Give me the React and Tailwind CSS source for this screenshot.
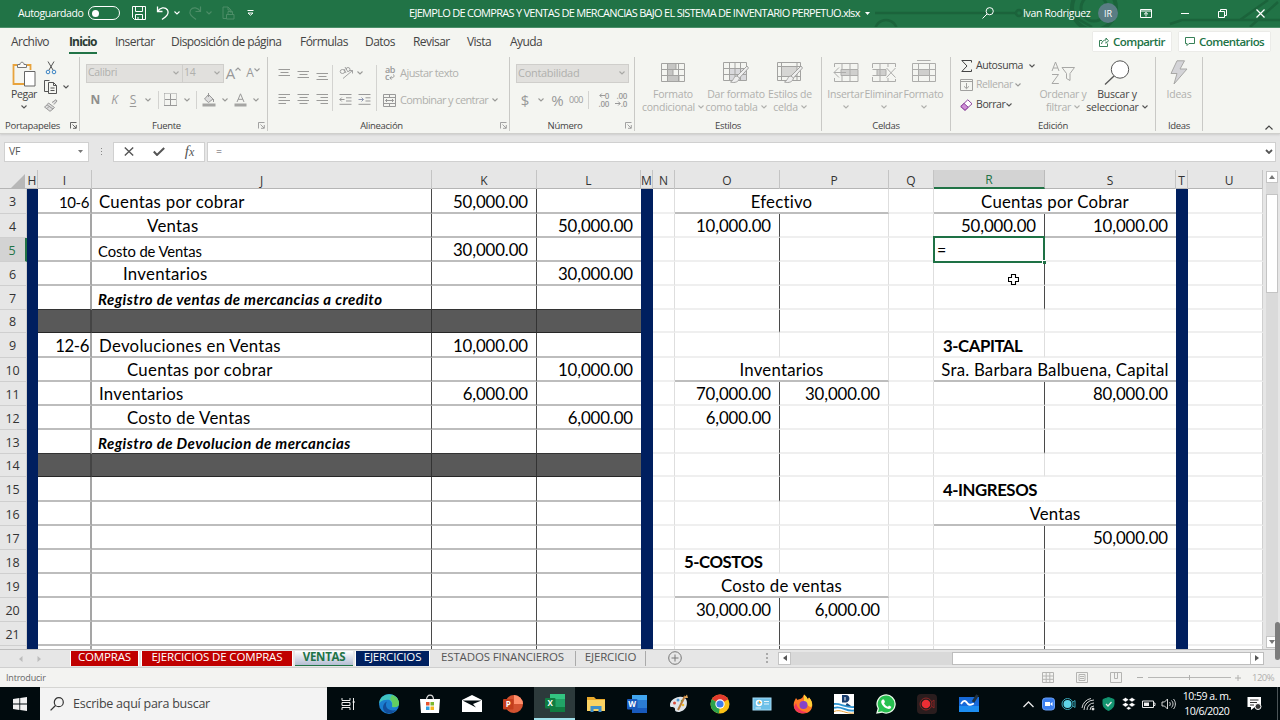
import React from "react";

const Chev = ({ className = "text-[#9a9a98]" }) => (
  <svg width="6" height="4" viewBox="0 0 6 4" className={`shrink-0 ${className}`}>
    <path d="M0.5 0.5 L3 3 L5.5 0.5" fill="none" stroke="currentColor" strokeWidth="1.1" />
  </svg>
);

const Slot = ({ className, children }) => (
  <div className={`flex h-full shrink-0 items-center justify-center ${className}`}>{children}</div>
);

const Icon = ({ w = 16, h = 16, className = "", children }) => (
  <svg width={w} height={h} viewBox={`0 0 ${w} ${h}`} fill="none" stroke="currentColor" className={`shrink-0 ${className}`}>
    {children}
  </svg>
);

/* ---------- title bar ---------- */

const TitleBar = () => (
  <header className="relative flex h-[28px] items-center border-b border-[#4b8f69] bg-[#217346] text-[11px] text-white">
    <svg className="absolute right-0 top-0" width="440" height="27" viewBox="0 0 440 27" fill="none" stroke="#1b633b" strokeWidth="2.5">
      <path d="M35 13 H175 M204 12 H226 L252 27" />
      <circle cx="179" cy="13" r="3" />
      <circle cx="46" cy="31" r="11" />
      <circle cx="254" cy="8" r="22" strokeWidth="4" />
      <circle cx="254" cy="8" r="13" strokeWidth="3" />
      <path d="M330 24 L342 20 H400 L428 0 M410 27 L438 2 M400 20 H440" />
    </svg>
    <div className="relative flex h-full w-full items-center">
      <span className="ml-[18px] w-[70px] whitespace-nowrap text-[10.5px] tracking-[-0.42px]">Autoguardado</span>
      <div className="flex h-[14px] w-[32px] items-center rounded-full border border-white pl-[3px]">
        <div className="h-[7px] w-[7px] rounded-full bg-white" />
      </div>
      <Slot className="ml-[10px] w-[18px]">
        <Icon w={14} h={14}>
          <path d="M0.5 0.5 H13.5 V13.5 H2.5 L0.5 11.5 Z M3.5 0.5 V5.5 H10.5 V0.5 M3.5 13.5 V8.5 H10.5 V13.5 M6 13 V11" />
        </Icon>
      </Slot>
      <Slot className="ml-[6px] w-[18px]">
        <Icon w={14} h={14} className="text-white">
          <path d="M1.5 0.5 V5.5 H6.5 M1.8 5.2 C4 1.5 9 0.5 11.5 4 C13.5 8 10 10.5 6 13.5" strokeWidth="1.3" />
        </Icon>
      </Slot>
      <Slot className="w-[10px]"><Chev className="text-white" /></Slot>
      <Slot className="ml-[4px] w-[18px]">
        <Icon w={14} h={14} className="text-[#4c8d67]">
          <path d="M12.5 0.5 V5.5 H7.5 M12.2 5.2 C10 1.5 5 0.5 2.5 4 C0.5 8 4 10.5 8 13.5" strokeWidth="1.2" />
        </Icon>
      </Slot>
      <Slot className="w-[10px]"><Chev className="text-[#4c8d67]" /></Slot>
      <Slot className="ml-[5px] w-[18px]">
        <Icon w={13} h={14} className="text-[#4c8d67]">
          <path d="M4 12.5 H1 V1 H6 L9 4 V7 M6 1 V4 H9 M4.5 8.5 H12 V13 H4.5 Z M6 8 V5.5 H10.5 V8" />
        </Icon>
      </Slot>
      <Slot className="ml-[5px] w-[17px]">
        <Icon w={7} h={6}>
          <path d="M0.5 0.5 H6.5 M1 3 L3.5 5.2 L6 3 Z" />
        </Icon>
      </Slot>
      <span className="ml-[150px] w-[456px] whitespace-nowrap text-[11px] tracking-[-0.71px]">
        EJEMPLO DE COMPRAS Y VENTAS DE MERCANCIAS BAJO EL SISTEMA DE INVENTARIO PERPETUO.xlsx
      </span>
      <svg width="5" height="3" viewBox="0 0 5 3"><path d="M0 0 H5 L2.5 3 Z" fill="#fff" /></svg>
      <Slot className="ml-[108px] w-[20px]">
        <Icon w={12} h={12}>
          <circle cx="7.7" cy="4.2" r="3.6" />
          <path d="M5 7 L0.5 11.5" />
        </Icon>
      </Slot>
      <span className="ml-[25px] w-[75px] whitespace-nowrap text-[10.5px] tracking-[-0.35px]">Ivan Rodriguez</span>
      <div className="flex h-[20px] w-[20px] items-center justify-center rounded-full bg-[#5a7d84] text-[9px]">IR</div>
      <Slot className="ml-[20px] w-[16px]">
        <Icon w={12} h={9}>
          <path d="M0.5 0.5 H11.5 V8.5 H0.5 Z M0.5 2 H11.5 M6 7.5 V3.5 M4 5.3 L6 3.5 L8 5.3" />
        </Icon>
      </Slot>
      <Slot className="ml-[22px] w-[18px]"><div className="h-px w-[8px] bg-white" /></Slot>
      <Slot className="ml-[19px] w-[18px]">
        <Icon w={9} h={9}>
          <path d="M0.5 2.5 H6.5 V8.5 H0.5 Z M2.5 2 V0.5 H8.5 V6.5 H7" />
        </Icon>
      </Slot>
      <Slot className="ml-[20px] w-[18px]">
        <Icon w={9} h={9}><path d="M0.5 0.5 L8.5 8.5 M8.5 0.5 L0.5 8.5" strokeWidth="1.2" /></Icon>
      </Slot>
    </div>
  </header>
);

/* ---------- menu ---------- */

const menu = [
  { label: "Archivo", w: "w-[58px]" },
  { label: "Inicio", w: "w-[46px]", active: true },
  { label: "Insertar", w: "w-[56px]" },
  { label: "Disposición de página", w: "w-[129px]" },
  { label: "Fórmulas", w: "w-[65px]" },
  { label: "Datos", w: "w-[48px]" },
  { label: "Revisar", w: "w-[54px]" },
  { label: "Vista", w: "w-[43px]" },
  { label: "Ayuda", w: "w-[60px]" },
];

const Menu = () => (
  <nav className="flex h-[28px] items-center pl-[11px] pr-[10px] text-[12px] text-[#444]">
    {menu.map((m) => (
      <div key={m.label} className={`flex h-full items-center whitespace-nowrap tracking-[-0.55px] ${m.w}`}>
        {m.active ? (
          <span className="mt-[3px] border-b-2 border-[#217346] font-bold leading-[20px] tracking-[-0.85px] text-[#2b3b33]">{m.label}</span>
        ) : (
          <span>{m.label}</span>
        )}
      </div>
    ))}
    <div className="ml-auto flex gap-[8px] text-[11.5px] font-semibold tracking-[-0.55px] text-[#217346]">
      <div className="flex h-[19px] w-[78px] items-center gap-[4px] bg-white pl-[6px] shadow-[0_0_1px_#bbb]">
        <Icon w={10} h={10}>
          <path d="M3 3.5 H0.5 V9.5 H8.5 V6.5 M2.5 7 C3 4 5 3 7 3 V1 L9.5 3.8 L7 6.3 V4.5" strokeWidth="0.9" />
        </Icon>
        Compartir
      </div>
      <div className="flex h-[19px] w-[91px] items-center gap-[4px] bg-white pl-[6px] shadow-[0_0_1px_#bbb]">
        <Icon w={10} h={9}>
          <path d="M0.5 0.5 H9.5 V6.5 H4 L2 8.5 V6.5 H0.5 Z" strokeWidth="0.9" />
        </Icon>
        Comentarios
      </div>
    </div>
  </nav>
);

/* ---------- ribbon ---------- */

const Group = ({ label, launcher, w, children }) => (
  <section className={`flex h-[74px] shrink-0 flex-col border-r border-[#c9c9c6] ${w}`}>
    <div className="h-[64px]">{children}</div>
    <div className="flex h-[10px] items-center">
      <span className="flex-1 whitespace-nowrap text-center text-[9.5px] leading-[10px] tracking-[-0.3px] text-[#444]">{label}</span>
      {launcher && (
        <Icon w={7} h={7} className={`mr-[2px] ml-[5px] ${launcher}`}>
          <path d="M0.5 6.5 V0.5 H6.5 M2.5 2.5 L6 6 M6.3 3 V6.3 H3" strokeWidth="0.9" />
        </Icon>
      )}
    </div>
  </section>
);

const Sep = ({ className = "h-[18px]" }) => <div className={`w-px shrink-0 bg-[#d3d3d0] ${className}`} />;

const Combo = ({ className, children }) => (
  <div className={`flex h-[19px] shrink-0 items-center justify-between border border-[#cfcecb] bg-[#e1e0dd] pl-[1px] pr-[3px] text-[10.5px] tracking-[-0.3px] text-[#b0b0ad] ${className}`}>
    {children}
    <Chev className="text-[#a8a8a5]" />
  </div>
);

const Lines = ({ d }) => (
  <Icon w={13} h={12} className="text-[#9b9b99]"><path d={d} /></Icon>
);

const Clipboard = () => (
  <div className="flex h-full">
    <div className="ml-[8px] flex w-[32px] flex-col items-center pt-[4px]">
      <Icon w={24} h={26}>
        <path d="M5 4 H1.5 V23 H12 M15 4 H18.5 V9" stroke="#e8a33d" strokeWidth="1.8" />
        <path d="M5.5 3.5 H8 C8 0.5 12 0.5 12 3.5 H14.5 V6.5 H5.5 Z" stroke="#777" fill="#fafafa" />
        <path d="M12.5 10.5 H23 V25 H12.5 Z" stroke="#666" fill="#fff" />
      </Icon>
      <span className="mt-[1px] text-[10.5px] leading-[13px] tracking-[-0.4px] text-[#444]">Pegar</span>
      <Chev className="mt-[4px] text-[#555]" />
    </div>
    <div className="ml-[4px] flex flex-col gap-[5px] pt-[4px]">
      <Icon w={14} h={14}>
        <path d="M4 0.5 L9 9 M10 0.5 L5 9" stroke="#555" />
        <circle cx="4" cy="11" r="1.8" stroke="#3a83c4" />
        <circle cx="10" cy="11" r="1.8" stroke="#3a83c4" />
      </Icon>
      <div className="flex items-center gap-[5px]">
        <Icon w={14} h={14} className="text-[#555]">
          <path d="M4 11.5 H0.5 V0.5 H5.5 M4.5 2.5 H9.5 L12.5 5.5 V13.5 H4.5 Z M9.5 2.5 V5.5 H12.5 M6.5 8 H10.5 M6.5 10.5 H10.5" />
        </Icon>
        <Chev className="text-[#555]" />
      </div>
      <Icon w={14} h={13} className="text-[#999]">
        <path d="M8 3.5 L12 0.7 L13 2 L10 5.5 M4.5 4 L10.5 8.5 L9 10 L3 5.8 Z M3 6 L0.5 8 L6 12.3 L9 10 M3 9.5 L5 7.5" fill="#ddd" />
      </Icon>
    </div>
  </div>
);

const Fuente = () => (
  <div className="pl-[6px] pt-[7px] text-[#999]">
    <div className="flex h-[19px] items-center">
      <Combo className="w-[97px]">Calibri</Combo>
      <Combo className="w-[41px] border-l-0">14</Combo>
      <Slot className="w-[19px] text-[15px]">A<Chev className="mb-[8px] rotate-180" /></Slot>
      <Slot className="w-[20px] text-[12px]">A<Chev className="mb-[7px]" /></Slot>
    </div>
    <div className="mt-[7px] flex h-[20px] items-center text-[12px]">
      <Slot className="w-[19px] font-bold text-[#8f8f8d]">N</Slot>
      <Slot className="w-[19px] italic">K</Slot>
      <Slot className="w-[18px] underline underline-offset-2">S</Slot>
      <Slot className="w-[12px]"><Chev /></Slot>
      <Sep className="ml-[4px] h-[18px]" />
      <Slot className="w-[23px]">
        <Icon w={13} h={13}>
          <path d="M0.5 0.5 H12.5 V12.5 M0.5 0.5 V12.5" strokeDasharray="1 1" />
          <path d="M6.5 1 V12 M1 6.5 H12 M0 12.5 H13" />
        </Icon>
      </Slot>
      <Slot className="w-[9px]"><Chev /></Slot>
      <Sep className="ml-[5px] h-[18px]" />
      <Slot className="w-[24px]">
        <Icon w={14} h={14}>
          <path d="M2.5 6 L6.5 1.5 L11 6 L6.5 9.5 Z M6.5 0 V4" fill="#ddd" />
          <path d="M11.5 6 V9" />
          <path d="M0.5 12 H13.5" strokeWidth="3" stroke="#a5a5a3" />
        </Icon>
      </Slot>
      <Slot className="w-[8px]"><Chev /></Slot>
      <Slot className="w-[23px]">
        <Icon w={13} h={14}>
          <path d="M3 9 L6.5 0.8 L10 9 M4.2 6.3 H8.8" />
          <path d="M0.5 12 H12.5" strokeWidth="3" stroke="#a5a5a3" />
        </Icon>
      </Slot>
      <Slot className="w-[8px]"><Chev /></Slot>
    </div>
  </div>
);

const Alineacion = () => (
  <div className="flex text-[10.5px] tracking-[-0.4px] text-[#b0b0ad]">
    <div className="ml-[7px] mt-[4px] grid h-[52px] w-[57px] grid-cols-3 place-items-center">
      <Lines d="M0.5 1.500 H12 M2.500 4.500 H10.500 M0.500 7.500 H12" />
      <Lines d="M0.5 3.500 H12 M2.500 6.500 H10.500 M0.500 9.500 H12" />
      <Lines d="M0.5 5.500 H12 M2.500 8.500 H10.500 M0.500 11.500 H12" />
      <Lines d="M0.5 0.500 H12 M0.500 3.500 H8 M0.500 6.500 H12 M0.500 9.500 H8" />
      <Lines d="M0.5 0.500 H12 M2.500 3.500 H10.500 M0.500 6.500 H12 M2.500 9.500 H10.500" />
      <Lines d="M0.5 0.500 H12 M4.500 3.500 H12 M0.500 6.500 H12 M4.500 9.500 H12" />
    </div>
    <Sep className="mt-[8px] h-[46px]" />
    <div className="mt-[4px] flex w-[43px] flex-col pl-[6px] text-[#999]">
      <div className="flex h-[24px] items-center gap-[3px]">
        <Icon w={15} h={13}>
          <path d="M3.5 5.5 m-2.3 0 a2.3 2 0 1 0 4.6 0 a2.3 2 0 1 0 -4.6 0 M5 3 L7 7 M6 1 L9 6 M9 3.5 m-2 0 a2 2 0 1 1 2 2 M4 12.5 L13.5 4.5 M10.5 4.5 H13.5 V7.5" strokeWidth="0.9" />
        </Icon>
        <Chev />
      </div>
      <div className="flex h-[28px] items-center gap-[6px] pt-[2px]">
        <Icon w={13} h={11}><path d="M0.5 0.5 H12.5 M7 3.8 H12.5 M7 7 H12.5 M0.5 10.3 H12.5 M5.5 5.5 H0.8 M2.8 3.5 L0.8 5.5 L2.8 7.5" /></Icon>
        <Icon w={13} h={11}><path d="M0.5 0.5 H12.5 M7.5 3.8 H12.5 M7.5 7 H12.5 M0.5 10.3 H12.5" /><path d="M0.5 5.5 H5.5 M3.5 3.5 L5.5 5.5 L3.5 7.5" stroke="#8f97b0" /></Icon>
      </div>
    </div>
    <Sep className="mt-[8px] h-[46px]" />
    <div className="mt-[3px] pl-[6px]">
      <div className="flex h-[27px] items-center">
        <Slot className="w-[14px] flex-col text-[9px] font-semibold text-[#999]">
          <span className="leading-[8px]">ab</span>
          <span className="flex items-center leading-[6px]">c<Icon w={6} h={6}><path d="M4.500 0.500 C6 3 4 4 1 4 M2.500 2.300 L0.800 4 L2.500 5.600" /></Icon></span>
        </Slot>
        <span className="ml-[3px] whitespace-nowrap text-[11px] tracking-[-0.55px]">Ajustar texto</span>
      </div>
      <div className="flex h-[27px] items-center">
        <Icon w={13} h={13} className="text-[#999]">
          <path d="M0.5 0.5 H12.5 V12.5 H0.5 Z M0.5 3.5 H12.5 M0.5 9.5 H12.5 M6.5 0.5 V3.5 M6.5 9.5 V12.5 M2.5 6.5 H10.5 M4 5 L2.5 6.5 L4 8 M9 5 L10.5 6.5 L9 8" />
        </Icon>
        <span className="ml-[4px] w-[92px] whitespace-nowrap text-[11px] tracking-[-0.6px]">Combinar y centrar</span>
        <Chev />
      </div>
    </div>
  </div>
);

const Decimals = ({ top, bottom, arrow }) => (
  <div className="flex w-[14px] flex-col items-end text-[8px] font-semibold tracking-[-0.3px]">
    <span className="flex items-center leading-[8px]">{arrow === "left" && <Icon w={6} h={5}><path d="M6 2.500 H1 M2.800 0.500 L0.800 2.500 L2.800 4.500" /></Icon>}{top}</span>
    <span className="flex items-center leading-[8px]">{arrow === "right" && <Icon w={6} h={5}><path d="M0 2.500 H5 M3.200 0.500 L5.200 2.500 L3.200 4.500" /></Icon>}{bottom}</span>
  </div>
);

const Numero = () => (
  <div className="pl-[6px] pt-[7px] text-[#999]">
    <Combo className="w-[113px] text-[11px]">Contabilidad</Combo>
    <div className="mt-[7px] flex h-[20px] items-center">
      <Slot className="w-[18px] text-[15px]">$</Slot>
      <Slot className="w-[14px]"><Chev /></Slot>
      <Slot className="w-[19px] text-[15px]">%</Slot>
      <Slot className="w-[18px] text-[9px] tracking-[-0.5px]">000</Slot>
      <Sep className="ml-[3px] h-[18px]" />
      <Slot className="ml-[4px] w-[18px]"><Decimals top="0" bottom=".00" arrow="left" /></Slot>
      <Slot className="w-[18px]"><Decimals top=".00" bottom=".0" arrow="right" /></Slot>
    </div>
  </div>
);

const Big = ({ w, icon, lines, chev, dark }) => (
  <div className={`flex shrink-0 flex-col items-center whitespace-nowrap pt-[3px] text-[10.5px] leading-[13px] tracking-[-0.25px] ${dark ? "text-[#444]" : "text-[#b0b0ad]"} ${w}`}>
    <div className="mb-[2px] flex h-[26px] items-center">{icon}</div>
    <span>{lines[0]}</span>
    {lines[1] ? (
      <span className="flex items-center gap-[3px]">{lines[1]}<Chev className={dark ? "text-[#555]" : "text-[#b0b0ad]"} /></span>
    ) : (
      chev && <Chev className="mt-[4px]" />
    )}
  </div>
);

const tableLines = "M0.5 0.5 H23.5 V18.5 H0.5 Z M0.5 6.5 H23.5 M0.5 12.5 H23.5 M6.5 0.5 V18.5 M17.5 0.5 V18.5";
const brush = "M24 4 L14 14 L16.5 16 L25.5 6 Z M14 14 C10.5 14 11 18.5 7.5 20 C12 21.5 16 19.5 16.5 16";

const Estilos = () => (
  <div className="flex pl-[5px]">
    <Big w="w-[66px]" lines={["Formato", "condicional"]} icon={
      <Icon w={24} h={19} className="text-[#a3a3a1]">
        <path d="M6.5 0.5 H15 V6.5 H6.5 Z M6.5 6.5 H12 V12.5 H6.5 Z M6.5 12.5 H18 V18.5 H6.5 Z" fill="#c6c6c4" />
        <path d={tableLines} />
      </Icon>} />
    <Big w="w-[60px]" lines={["Dar formato", "como tabla"]} icon={
      <Icon w={26} h={22} className="text-[#a3a3a1]">
        <path d="M6.5 6.5 H23.5 V18.5 H6.5 Z" fill="#d9d9dc" stroke="none" />
        <path d={tableLines + " M12 0.5 V18.5"} />
        <path d={brush} fill="#eee" />
      </Icon>} />
    <Big w="w-[48px]" lines={["Estilos de", "celda"]} icon={
      <Icon w={26} h={22} className="text-[#a3a3a1]">
        <path d="M5 5 H20 V14 H5 Z" fill="#d6d6d4" stroke="none" />
        <path d="M0.5 0.5 H23.5 V18.5 H0.5 Z M0.5 4.5 H23.5 M0.5 14.5 H23.5 M4.5 0.5 V18.5 M20 0.5 V18.5" />
        <path d={brush} fill="#eee" />
      </Icon>} />
  </div>
);

const Celdas = () => (
  <div className="flex pl-[3px]">
    <Big w="w-[41px]" chev lines={["Insertar"]} icon={
      <Icon w={26} h={19} className="text-[#adadab]">
        <path d="M8 6.5 H25 V12.5 H8 Z" fill="#cfcfcd" />
        <path d="M1.5 4 V0.5 H25 V6 M1.5 15 V18.5 H25 V12.5 M9 0.5 V6 M17 0.5 V18.5 M9 13 V18.5 M13 9.5 H1 M6 4.5 L1 9.5 L6 14.5" />
      </Icon>} />
    <Big w="w-[35px]" chev lines={["Eliminar"]} icon={
      <Icon w={24} h={19} className="text-[#adadab]">
        <path d="M5 6.5 H14 V12.5 H5 Z" fill="#cfcfcd" />
        <path d="M0.5 5 V0.5 H23.5 V4 M0.5 14 V18.5 H23.5 V16 M0.5 6.5 H14 M0.5 12.5 H14 M8 0.5 V18.5 M16 0.5 V4 M16 15 V18.5 M14.5 5 L23.5 14.5 M23.5 5 L14.5 14.5" />
      </Icon>} />
    <Big w="w-[45px]" chev lines={["Formato"]} icon={
      <Icon w={24} h={22} className="mb-[3px] text-[#adadab]">
        <path d="M6.5 9.5 H17.5 V15.5 H6.5 Z" fill="#cfcfcd" />
        <path d="M0.5 3.5 H23.5 V21.5 H0.5 Z M0.5 9.5 H23.5 M0.5 15.5 H23.5 M6.5 3.5 V21.5 M17.5 3.5 V21.5 M5 0.5 H18.5" />
      </Icon>} />
  </div>
);

const Edicion = () => (
  <div className="flex text-[10.5px] tracking-[-0.4px] text-[#444]">
    <div className="ml-[9px] flex w-[78px] flex-col">
      <div className="flex h-[19px] items-center">
        <Slot className="w-[13px]"><Icon w={11} h={12}><path d="M10.5 2.5 V0.5 H0.8 L6 6 L0.8 11.5 H10.5 V9.5" /></Icon></Slot>
        <span className="ml-[3px] w-[53px] whitespace-nowrap">Autosuma</span><Chev className="text-[#555]" />
      </div>
      <div className="flex h-[19px] items-center text-[#b0b0ad]">
        <Icon w={13} h={12} className="text-[#a0a09e]"><path d="M0.5 0.5 H12.5 V11.5 H0.5 Z M0.5 2.5 H12.5 M6.5 4 V9.5 M4 7.3 L6.5 9.7 L9 7.3" /></Icon>
        <span className="ml-[3px] w-[39px] whitespace-nowrap">Rellenar</span><Chev />
      </div>
      <div className="flex h-[20px] items-center">
        <Icon w={13} h={12}>
          <path d="M0.8 7.5 L7.8 0.8 L12 4.8 L5 11.3 Z" stroke="#8a3f9a" fill="#fff" />
          <path d="M0.8 7.5 L4 4.4 L8.2 8.3 L5 11.3 Z" stroke="#8a3f9a" fill="#cf8fd6" />
        </Icon>
        <span className="ml-[3px] w-[30px] whitespace-nowrap">Borrar</span><Chev className="text-[#555]" />
      </div>
    </div>
    <Big w="w-[50px]" lines={["Ordenar y", "filtrar"]} icon={
      <Icon w={25} h={24} className="text-[#a8a8a6]">
        <path d="M1 10 L4.5 1 L8 10 M2.2 7 H6.8 M1 13.5 H7.5 L1 22.5 H7.8 M11 6.5 H23.5 L19 12.5 V19.5 L15.5 17.5 V12.5 Z" />
      </Icon>} />
    <Big w="w-[58px]" dark lines={["Buscar y", "seleccionar"]} icon={
      <Icon w={26} h={25} className="text-[#555]">
        <circle cx="16" cy="9.5" r="8.7" fill="#fff" />
        <path d="M10 16 L1 24.5" strokeWidth="1.3" />
      </Icon>} />
  </div>
);

const Ribbon = () => (
  <div className="flex h-[78px] border-b border-[#cfcfcc] pt-[1px]">
    <Group label="Portapapeles" launcher="text-[#555]" w="w-[80px]"><Clipboard /></Group>
    <Group label="Fuente" launcher="text-[#999]" w="w-[188px]"><Fuente /></Group>
    <Group label="Alineación" launcher="text-[#999]" w="w-[242px]"><Alineacion /></Group>
    <Group label="Número" launcher="text-[#999]" w="w-[125px]"><Numero /></Group>
    <Group label="Estilos" w="w-[187px]"><Estilos /></Group>
    <Group label="Celdas" w="w-[129px]"><Celdas /></Group>
    <Group label="Edición" w="w-[205px]"><Edicion /></Group>
    <Group label="Ideas" w="w-[47px]">
      <Big w="w-[46px]" lines={["Ideas"]} icon={
        <Icon w={18} h={25} className="text-[#a8a8a6]">
          <path d="M7 0.8 H14.5 L10 9 H17 L4 24 L7 13.5 H1 Z" fill="#d4d4d8" />
        </Icon>} />
    </Group>
    <Icon w={8} h={5} className="mb-[3px] ml-auto mr-[7px] self-end text-[#444]"><path d="M0.5 4.5 L4 1 L7.5 4.5" strokeWidth="1.2" /></Icon>
  </div>
);

/* ---------- formula bar ---------- */

const FormulaBar = () => (
  <div className="flex h-[36px] items-start pl-[4px] pt-[8px] text-[10.5px] text-[#555]">
    <div className="flex h-[20px] w-[85px] items-center justify-between border border-[#d0d0d0] bg-white pl-[4px] pr-[5px] tracking-[-0.3px]">
      VF
      <svg width="5" height="3" viewBox="0 0 5 3"><path d="M0 0 H5 L2.5 3 Z" fill="#777" /></svg>
    </div>
    <div className="flex h-[20px] w-[24px] flex-col items-center justify-center gap-[2px]">
      <i className="h-px w-px bg-[#888]" /><i className="h-px w-px bg-[#888]" /><i className="h-px w-px bg-[#888]" />
    </div>
    <div className="flex h-[20px] w-[92px] items-center justify-around border border-[#d0d0d0] bg-white">
      <Icon w={10} h={9}><path d="M0.8 0.5 L9.2 8.5 M9.2 0.5 L0.8 8.5" strokeWidth="1.4" /></Icon>
      <Icon w={12} h={9}><path d="M0.8 4.5 L4 8 L11.2 1" strokeWidth="2" /></Icon>
      <span className="font-['Liberation_Serif',serif] text-[15px] italic leading-none">f<span className="text-[12px]">x</span></span>
    </div>
    <div className="ml-[2px] flex h-[20px] w-[1069px] items-center justify-between border border-[#d0d0d0] bg-white pl-[8px] pr-[2px]">
      =
      <Icon w={8} h={5}><path d="M1 1 L4 4 L7 1" strokeWidth="1.8" /></Icon>
    </div>
  </div>
);

/* ---------- grid ---------- */

const columns = [
  { id: "", w: "w-[27px]" },
  { id: "H", w: "w-[11px]" },
  { id: "I", w: "w-[54px]" },
  { id: "J", w: "w-[340px]" },
  { id: "K", w: "w-[105px]" },
  { id: "L", w: "w-[104px]" },
  { id: "M", w: "w-[12px]" },
  { id: "N", w: "w-[22px]" },
  { id: "O", w: "w-[105px]" },
  { id: "P", w: "w-[109px]" },
  { id: "Q", w: "w-[45px]" },
  { id: "R", w: "w-[111px]", active: true },
  { id: "S", w: "w-[131px]" },
  { id: "T", w: "w-[12px]" },
  { id: "U", w: "w-[75px] pl-[8px]" },
];

// j = [text, indent class, text class]; mid/right hold a T-account: title (t), heading (h) or a debit/credit pair
const small = "text-[14.8px] pt-[5px]";
const note = "text-[15px] pt-[5px] font-bold italic";

const rows = [
  { n: 3, i: "10-6", iSmall: true, j: ["Cuentas por cobrar", "pl-[7px]"], k: "50,000.00", mid: { t: "Efectivo" }, right: { t: "Cuentas por Cobrar" } },
  { n: 4, j: ["Ventas", "pl-[55px]"], l: "50,000.00", mid: { a: "10,000.00", v: 1 }, right: { a: "50,000.00", b: "10,000.00", v: 1, under: true } },
  { n: 5, j: ["Costo de Ventas", "pl-[6px]", small], k: "30,000.00", mid: { v: 1 }, right: { v: 1, editing: true } },
  { n: 6, j: ["Inventarios", "pl-[31px]"], l: "30,000.00", mid: { v: 1 }, right: { v: 1 } },
  { n: 7, j: ["Registro de ventas de mercancias a credito", "pl-[6px] tracking-[0.42px]", note], mid: { v: 1 }, right: { v: 1 } },
  { n: 8, dark: true, mid: { v: 1 }, right: {} },
  { n: 9, i: "12-6", j: ["Devoluciones en Ventas", "pl-[7px]"], k: "10,000.00", mid: {}, right: { h: "3-CAPITAL" } },
  { n: 10, j: ["Cuentas por cobrar", "pl-[35px]"], l: "10,000.00", mid: { t: "Inventarios" }, right: { t: "Sra. Barbara Balbuena, Capital" } },
  { n: 11, j: ["Inventarios", "pl-[7px]"], k: "6,000.00", mid: { a: "70,000.00", b: "30,000.00", v: 1 }, right: { b: "80,000.00", v: 1 } },
  { n: 12, j: ["Costo de Ventas", "pl-[35px]"], l: "6,000.00", mid: { a: "6,000.00", v: 1 }, right: { v: 1 } },
  { n: 13, j: ["Registro de Devolucion de mercancias", "pl-[6px] tracking-[0.42px]", note], mid: { v: 1 }, right: { v: 1 } },
  { n: 14, dark: true, mid: { v: 1 }, right: {} },
  { n: 15, mid: { v: 1 }, right: { h: "4-INGRESOS", merged: true } },
  { n: 16, mid: {}, right: { t: "Ventas" } },
  { n: 17, mid: {}, right: { b: "50,000.00", v: 1 } },
  { n: 18, mid: { h: "5-COSTOS" }, right: { v: 1 } },
  { n: 19, mid: { t: "Costo de ventas" }, right: { v: 1 } },
  { n: 20, mid: { a: "30,000.00", b: "6,000.00", v: 1 }, right: { v: 1 } },
  { n: 21, mid: { v: 1 }, right: { v: 1 } },
  { n: "", mid: { v: 1 }, right: { v: 1 } },
];

const light = "border-b-2 border-b-[#efefef]";
const gray = "border-b-2 border-b-[#bdbdbd]";

const Account = ({ data, w, wa, wb, edge }) => {
  if (data.t) {
    return <div className={`flex items-center justify-center whitespace-nowrap pt-[4px] tracking-[0.22px] ${w} ${gray} ${edge}`}>{data.t}</div>;
  }
  const line = data.v ? "border-r border-r-[#4a4a4a]" : data.merged ? "border-r border-r-white" : "border-r border-r-[#dedede]";
  const bottom = data.under ? gray : light;
  return (
    <div className={`flex ${w}`}>
      <div className={`relative flex items-center whitespace-nowrap pt-[4px] ${wa} ${bottom} ${line} ${data.h ? "pl-[9px] font-bold tracking-[-0.45px]" : "justify-end pr-[8px]"}`}>
        {data.h || data.a}
        {data.editing && (
          <div className="absolute -left-px -top-[2px] z-10 flex h-[27px] w-[112px] items-center border-2 border-[#1e7145] bg-white pl-[2px] pt-[2px] text-[16px]">
            =
            <i className="absolute -bottom-[3px] -right-[3px] h-[4px] w-[4px] border-l border-t border-white bg-[#1e7145]" />
          </div>
        )}
      </div>
      <div className={`flex items-center justify-end pr-[8px] pt-[4px] ${wb} ${bottom} ${edge}`}>{data.b}</div>
    </div>
  );
};

const rowHeight = (r) => {
  if (r.n === 3 || r.n === 9 || r.n === 15) return "h-[25px]";
  if (r.dark) return "h-[23px]";
  if (r.n === "") return "h-[3px]";
  return "h-[24px]";
};

const Row = ({ r, beforeDark }) => {
  // trailing sliver of the next row, cut off by the sheet tabs
  if (r.n === "") {
    return (
      <div className="flex h-[3px] shrink-0">
        <div className="w-[27px] border-r border-r-[#cfcfcf]" />
        <div className="w-[11px] bg-[#001f5f]" />
        <div className="w-[54px] border-r-2 border-r-[#a5a5a5]" />
        <div className="w-[340px] border-r border-r-[#4a4a4a]" />
        <div className="w-[105px] border-r border-r-[#4a4a4a]" />
        <div className="w-[104px]" />
        <div className="w-[12px] bg-[#001f5f]" />
        <div className="w-[22px] border-r border-r-[#dedede]" />
        <div className="w-[105px] border-r border-r-[#4a4a4a]" />
        <div className="w-[109px] border-r border-r-[#dedede]" />
        <div className="w-[45px] border-r border-r-[#dedede]" />
        <div className="w-[111px] border-r border-r-[#4a4a4a]" />
        <div className="w-[131px]" />
        <div className="w-[12px] bg-[#001f5f]" />
        <div className="w-[75px] border-r border-r-[#cfcfcf]" />
      </div>
    );
  }
  const edge = r.dark ? "border-b border-b-[#262626] bg-[#595959]" : beforeDark ? "border-b border-b-[#333]" : gray;
  const vline = r.dark ? "border-r border-r-[#333]" : "border-r border-r-[#4a4a4a]";
  const [text, indent, kind = "pt-[4px] tracking-[0.28px]"] = r.j || ["", ""];
  return (
    <div className={`flex shrink-0 ${rowHeight(r)}`}>
      <div className={`flex w-[27px] items-center justify-center border-b border-r border-b-[#cfcfcf] pr-px pt-[4px] font-['Open_Sans',sans-serif] text-[12.5px] tracking-[-0.2px] ${r.n === 5 ? "border-r-2 border-r-[#217346] bg-[#d3d3d3] text-[#217346]" : "border-r-[#cfcfcf] text-[#333]"}`}>
        {r.n}
      </div>
      <div className="w-[11px] bg-[#001f5f]" />
      <div className={`flex w-[54px] items-center justify-end pr-[1px] pt-[4px] tracking-[-0.4px] ${edge} ${r.dark ? "border-r-2 border-r-[#444]" : "border-r-2 border-r-[#a5a5a5]"} ${r.iSmall ? "text-[15px]" : ""}`}>{r.i}</div>
      <div className={`flex w-[340px] items-center whitespace-nowrap ${edge} ${vline} ${indent} ${kind}`}>{text}</div>
      <div className={`flex w-[105px] items-center justify-end pr-[8px] pt-[4px] ${edge} ${vline}`}>{r.k}</div>
      <div className={`flex w-[104px] items-center justify-end pr-[8px] pt-[4px] ${edge}`}>{r.l}</div>
      <div className="w-[12px] bg-[#001f5f]" />
      <div className={`w-[22px] border-r border-r-[#dedede] ${light}`} />
      <Account data={r.mid} w="w-[214px]" wa="w-[105px]" wb="w-[109px]" edge="border-r border-r-[#dedede]" />
      <div className={`w-[45px] border-r border-r-[#dedede] ${light}`} />
      <Account data={r.right} w="w-[242px]" wa="w-[111px]" wb="w-[131px]" edge="" />
      <div className="w-[12px] bg-[#001f5f]" />
      <div className={`w-[75px] border-r border-r-[#cfcfcf] ${light}`} />
    </div>
  );
};

const Grid = () => (
  <div className="flex h-[479px]">
    <div className="relative flex w-[1263px] flex-col overflow-hidden">
      <div className="flex h-[19px] border-b border-[#b5b5b5] text-[12px] text-[#333]">
        {columns.map((c) => (
          <div key={c.id} className={`flex h-[19px] shrink-0 items-center justify-center pt-[3px] ${c.w} ${c.active ? "border-b-2 border-r border-b-[#217346] border-r-[#bbb] bg-[#d3d3d3] text-[#217346]" : c.id ? "border-r border-[#c4c4c4]" : ""}`}>
            {c.id || <svg width="14" height="14" viewBox="0 0 14 14" className="ml-[8px]"><path d="M14 0 V14 H0 Z" fill="#b7b7b7" /></svg>}
          </div>
        ))}
      </div>
      <div className="flex flex-col bg-[linear-gradient(90deg,#e6e6e6_27px,#fff_27px)] font-['Lato',sans-serif] text-[16.8px] leading-none tracking-[-0.1px] text-black">
        {rows.map((r, idx) => (
          <Row key={idx} r={r} beforeDark={rows[idx + 1]?.dark} />
        ))}
      </div>
      {/* mouse pointer over the sheet */}
      <svg className="absolute left-[1008px] top-[104px]" width="11" height="11" viewBox="0 0 11 11">
        <path d="M3.5 0.5 H7.5 V3.5 H10.5 V7.5 H7.5 V10.5 H3.5 V7.5 H0.5 V3.5 H3.5 Z" fill="#fff" stroke="#000" strokeWidth="1.1" />
      </svg>
    </div>
    <div className="flex w-[17px] flex-col items-center">
      <div className="mt-px flex h-[12px] w-[12px] items-center justify-center border border-[#c4c4c4] bg-white">
        <svg width="6" height="4" viewBox="0 0 6 4"><path d="M0 4 H6 L3 0 Z" fill="#777" /></svg>
      </div>
      <div className="flex w-[12px] flex-1 flex-col bg-[#dadada] pt-[11px]">
        <div className="h-[99px] border border-[#c4c4c4] bg-white" />
      </div>
      <div className="mb-px flex h-[12px] w-[12px] items-center justify-center border border-[#c4c4c4] bg-white">
        <svg width="6" height="4" viewBox="0 0 6 4"><path d="M0 0 H6 L3 4 Z" fill="#777" /></svg>
      </div>
    </div>
  </div>
);

/* ---------- sheet tabs + status ---------- */

const SheetTabs = () => (
  <div className="flex h-[20px] border-b border-t border-b-[#cfcfcf] border-t-[#bdbdbd] bg-[#e6e6e6] text-[11.5px] leading-[11px] tracking-[-0.15px]">
    <div className="flex w-[70px] items-center pl-[19px] pt-[1px]">
      <svg width="22" height="6" viewBox="0 0 22 6" fill="#bcbcbc"><path d="M3.5 0 V6 L0 3 Z M18.5 0 V6 L22 3 Z" /></svg>
    </div>
    <div className="mt-px flex h-[15px] whitespace-nowrap text-center">
      <div className="h-[15px] w-[69px] border-x border-white bg-[#c00000] text-white">COMPRAS</div>
      <div className="ml-[2px] h-[15px] w-[152px] border-x border-white bg-[#c00000] text-white">EJERCICIOS DE COMPRAS</div>
      <div className="ml-[2px] h-[15px] w-[58px] border-b border-[#217346] bg-gradient-to-b from-white to-[#b4bdd3] font-bold tracking-[-0.3px] text-[#217346]">VENTAS</div>
      <div className="ml-[2px] h-[15px] w-[75px] border-x border-white bg-[#002060] text-white">EJERCICIOS</div>
      <div className="w-[146px] border-r border-[#aaa] text-[#555]">ESTADOS FINANCIEROS</div>
      <div className="w-[70px] border-r border-[#aaa] text-[#555]">EJERCICIO</div>
    </div>
    <Slot className="ml-[21px] w-[16px] text-[#777]">
      <Icon w={14} h={14}><circle cx="7" cy="7" r="6.3" /><path d="M7 3.5 V10.5 M3.5 7 H10.5" /></Icon>
    </Slot>
    <div className="ml-[83px] flex w-[2px] flex-col justify-center gap-[2px]">
      <i className="h-[2px] w-[2px] bg-[#aaa]" /><i className="h-[2px] w-[2px] bg-[#aaa]" /><i className="h-[2px] w-[2px] bg-[#aaa]" />
    </div>
    <div className="ml-[10px] mt-[2px] flex h-[13px] w-[486px] bg-[#d9d9d9]">
      <Slot className="w-[13px] border border-[#c4c4c4] bg-white"><svg width="4" height="6" viewBox="0 0 4 6"><path d="M4 0 V6 L0 3 Z" fill="#555" /></svg></Slot>
      <div className="ml-[161px] w-[299px] border border-[#bdbdbd] bg-white" />
      <Slot className="w-[13px] border border-l-0 border-[#bdbdbd] bg-white"><svg width="4" height="6" viewBox="0 0 4 6"><path d="M0 0 V6 L4 3 Z" fill="#555" /></svg></Slot>
    </div>
  </div>
);

const StatusBar = () => (
  <div className="flex h-[19px] items-center bg-[#f3f3f1] text-[9px] text-[#666]">
    <span className="ml-[6px] w-[1036px] tracking-[-0.2px]">Introducir</span>
    <div className="flex w-[91px] items-center gap-[22px] text-[#b4b4b2]">
      <Icon w={12} h={11}><path d="M0.5 0.5 H11.5 V10.5 H0.5 Z M4.2 0.5 V10.5 M7.8 0.5 V10.5 M0.5 4 H11.5 M0.5 7.3 H11.5" /></Icon>
      <Icon w={12} h={11}><path d="M0.5 0.5 H11.5 V10.5 H0.5 Z M3 2.5 H9 V8.5 H3 Z M4 4.5 H8 M4 6.5 H8" /></Icon>
      <Icon w={12} h={11}><path d="M0.5 0.5 H11.5 V10.5 H0.5 Z M4.5 0.5 V6.5 H7.5 V0.5" /></Icon>
    </div>
    <div className="flex items-center text-[#b0b0ae]">
      <i className="ml-[4px] h-px w-[6px] bg-[#b0b0ae]" />
      <div className="ml-[5px] flex h-[5px] w-[83px] items-center justify-center">
        <i className="h-px w-[41px] bg-[#b8b8b6]" /><i className="h-[5px] w-px bg-[#b0b0ae]" /><i className="h-px w-[41px] bg-[#b8b8b6]" />
      </div>
      <Icon w={6} h={6} className="ml-[4px]"><path d="M3 0 V6 M0 3 H6" /></Icon>
      <span className="ml-[11px] text-[9.5px] tracking-[-0.5px]">120%</span>
    </div>
  </div>
);

/* ---------- taskbar ---------- */

const App20 = ({ children, className = "" }) => (
  <div className={`flex h-full w-[41.4px] shrink-0 items-center justify-center ${className}`}>
    <svg width="20" height="20" viewBox="0 0 20 20">{children}</svg>
  </div>
);

const Office = ({ letter, dark, mid, lite, round }) => (
  <>
    {round ? (
      <>
        <circle cx="11" cy="10" r="9" fill={mid} />
        <path d="M11 1 A9 9 0 0 1 20 10 H11 Z" fill={lite} />
      </>
    ) : (
      <>
        <rect x="5" y="1" width="15" height="18" rx="1" fill={mid} />
        <rect x="5" y="1" width="15" height="5" fill={lite} />
        <rect x="5" y="14" width="15" height="5" fill={dark} />
      </>
    )}
    <rect x="0" y="5" width="10.5" height="10.5" rx="1" fill={dark} />
    <text x="5.2" y="13" textAnchor="middle" fontSize="8" fontWeight="700" fill="#fff" fontFamily="Open Sans, sans-serif">{letter}</text>
  </>
);

const Tray = ({ children, className = "w-[20px]" }) => (
  <Slot className={className}><svg width="15" height="14" viewBox="0 0 15 14" fill="none" stroke="#e8e8e8">{children}</svg></Slot>
);

const Taskbar = () => (
  <footer className="flex h-[33px] bg-[#010b0e] text-white">
    <Slot className="w-[40px]">
      <svg width="14" height="14" viewBox="0 0 14 14" fill="#f0f0f0"><path d="M0 2 L6.4 1 V6.6 H0 Z M7.2 0.9 L14 0 V6.6 H7.2 Z M0 7.4 H6.4 V13 L0 12 Z M7.2 7.4 H14 V14 L7.2 13.1 Z" /></svg>
    </Slot>
    <div className="flex w-[287px] shrink-0 items-center border-t border-[#d5d5d3] bg-[#f3f3f3] pl-[10px] text-[12.5px] tracking-[-0.25px] text-[#444]">
      <Icon w={14} h={14} className="text-[#333]"><circle cx="8.8" cy="5.2" r="4.5" strokeWidth="1.2" /><path d="M5.5 8.5 L0.6 13.4" strokeWidth="1.3" /></Icon>
      <span className="ml-[9px]">Escribe aquí para buscar</span>
    </div>
    <App20>
      <path d="M4 4 V6.500 H12 V4 M4 16 V13.500 H12 V16 M4 8.500 H12 V11.500 H4 Z M15.500 4 V16 M14.500 8 H17" fill="none" stroke="#eee" />
    </App20>
    <App20>
      <circle cx="10" cy="10" r="10" fill="#1b7fd0" />
      <path d="M0.300 8 C2 -2 19 -3 20 9 C20 13 16 14 13 13 C14 8 11 5 7 6 C3 6 1 8 0.300 10 Z" fill="#3fc3c0" />
      <path d="M13 1 C19 3 20.500 8 20 10.500 C19 13.500 15 13.500 13 12.500 C14 9 13 7 11 5 Z" fill="#62cf62" />
      <path d="M7 11 C7 15 12 17.500 17 16 C14 20 8 20.500 5 17 C3 14 4 9 8 7.500 C7 9 7 10 7 11 Z" fill="#124f9c" />
    </App20>
    <App20>
      <path d="M6.500 6 C6.500 -0.500 13.500 -0.500 13.500 6" fill="none" stroke="#ddd" strokeWidth="1.200" />
      <path d="M0 5 H20 L19 19 H1 Z" fill="#fff" />
      <path d="M6 8 H9.500 V11.500 H6 Z" fill="#e5532d" />
      <path d="M10.500 8 H14 V11.500 H10.500 Z" fill="#7cb82f" />
      <path d="M6 12.500 H9.500 V16 H6 Z" fill="#2f9fe0" />
      <path d="M10.500 12.500 H14 V16 H10.500 Z" fill="#f4b51e" />
    </App20>
    <App20>
      <path d="M0 6 L10 1 L20 6 V18 H0 Z" fill="#fff" />
      <path d="M0.500 6.500 H19.500 L11 10 L14 13.500 Z" fill="#010b0e" />
    </App20>
    <App20><Office letter="P" dark="#c43e1c" mid="#d35230" lite="#ff8f6b" round /></App20>
    <App20 className="border-b-2 border-[#9fe0ea] bg-[#2c3a3b]"><Office letter="X" dark="#107c41" mid="#21a366" lite="#33c481" /></App20>
    <App20>
      <path d="M1 3 H8 L10 5 H19 V17 H1 Z" fill="#e9a92c" />
      <path d="M1 6 H19 V17 H1 Z" fill="#fbd364" />
      <path d="M4.500 18 V12 H15.500 V18 H12.500 V15 H7.500 V18 Z" fill="#3f8fcb" />
    </App20>
    <App20><Office letter="W" dark="#185abd" mid="#2b7cd3" lite="#41a5ee" /></App20>
    <App20>
      <path d="M10 3 C17 2 19 7 17.500 12 C16 17 10 19 7 17.500 C5 16.500 7 14.500 5 13.500 C3 13 1 14 1 11 C1 7 5 3.500 10 3 Z" fill="#dfe4e8" />
      <circle cx="5.500" cy="9" r="1.500" fill="#d94a3a" /><circle cx="9" cy="6" r="1.500" fill="#4b9ad6" />
      <circle cx="13" cy="7" r="1.300" fill="#56ab4b" /><circle cx="14" cy="11" r="1.300" fill="#edb92e" />
      <path d="M16 2 L9 16" stroke="#b67a3c" strokeWidth="2" /><path d="M15 4 L18 0.500 L19 4 Z" fill="#e0a75d" />
    </App20>
    <App20>
      <circle cx="10" cy="10" r="9.500" fill="#fbc116" />
      <path d="M10 10 L1.800 5.200 A9.500 9.500 0 0 1 18.200 5.200 Z" fill="#e33b2e" />
      <path d="M10 10 L1.800 5.200 A9.500 9.500 0 0 0 9 19.450 Z" fill="#2da24c" />
      <path d="M10 5.200 H18.200 L10 8 Z" fill="#e33b2e" />
      <circle cx="10" cy="10" r="4.700" fill="#fff" /><circle cx="10" cy="10" r="3.600" fill="#3f7de8" />
    </App20>
    <App20>
      <rect x="1" y="4" width="18" height="12" fill="#6cc0e8" stroke="#a5dcf5" />
      <circle cx="7" cy="9" r="2.500" fill="none" stroke="#fff" strokeWidth="1.500" />
      <path d="M12 7.500 H17 M12 10 H17 M3.500 14 H9" stroke="#e3f5fc" /><path d="M7 6.500 V9 H9.500 Z" fill="#e9a92c" />
    </App20>
    <App20>
      <path d="M10 19.500 C4 19.500 0.500 15.500 0.700 10.500 C0.800 7.500 2 6 3 4 L4.500 6 C7 4.500 9 5 10 2.500 L11 0.500 C13 2 14 3.500 14.500 5 L16 3.500 C18 6 19.300 8 19.300 11 C19.300 16 15.500 19.500 10 19.500 Z" fill="#ff7a26" />
      <path d="M11 0.500 C13 2 14.500 4 15 6 L16 3.500 C18.500 6 19.500 9 19 12 C17 15 14 10 11 7 Z" fill="#ffcf37" />
      <path d="M1 13 C2.500 18.500 9 21 15 18 C11 18 5 17 3 9 Z" fill="#f2355b" />
      <circle cx="10.500" cy="11" r="4" fill="#8542c8" />
    </App20>
    <App20>
      <rect width="20" height="20" fill="#fff" />
      <path d="M8 1 H12 C16.500 1 16.500 8 12 8.500 H8 Z" fill="#173c6c" />
      <path d="M11 3 V6.500" stroke="#fff" />
      <path d="M13 9 L17 12 H11 Z" fill="#173c6c" />
      <path d="M0 10 C6 9 12 14 20 13 M0 14 C7 11 12 18 20 16.500" stroke="#2c93cf" strokeWidth="1.800" fill="none" />
      <path d="M0 17.500 C7 14.500 12 20.500 20 19" stroke="#eaa23a" fill="none" />
    </App20>
    <App20>
      <path d="M1 19 L2.300 14.500 A9 9 0 1 1 6 18 Z" fill="#27c04f" stroke="#e9fbe9" strokeWidth="1.300" />
      <path d="M6.500 5.500 L8 5.500 L9 8 L8 9.200 C9 11 10 12 12 12.700 L13 11.500 L15.300 12.700 C15 15 13 15.300 11 14.500 C8 13.500 5.500 10.500 5.200 8 C5.200 7 5.800 6 6.500 5.500 Z" fill="#fff" />
    </App20>
    <App20>
      <rect width="20" height="20" rx="4" fill="#2a1d1e" />
      <circle cx="9" cy="10" r="6" fill="none" stroke="#8c2424" /><circle cx="9" cy="10" r="4.300" fill="#ee2e34" />
      <path d="M14.500 8 L17 6 V14 L14.500 12" stroke="#8c2424" fill="none" />
    </App20>
    <App20>
      <path d="M0 3 H20 V18 H0 Z" fill="#1769d8" /><path d="M0 12 H20 V18 H0 Z" fill="#1d8df0" />
      <path d="M2 10 C5 5 7 7 9 10 C11 12 13 10 15 9.500" stroke="#fff" strokeWidth="1.800" fill="none" />
      <path d="M18.500 1 L14 8" stroke="#20303c" strokeWidth="3" />
    </App20>
    <div className="flex h-full flex-1 items-center pl-[29px]">
      <Tray><path d="M2.500 10 L7.500 5 L12.500 10" strokeWidth="1.300" /></Tray>
      <Tray><rect x="1.500" y="1" width="12" height="12" rx="3" fill="#3b7ff0" stroke="#6aa0f5" /><path d="M4 5 H9 V9 H4 Z M9.500 6.500 L11.500 5 V9 L9.500 7.500 Z" fill="#fff" stroke="none" /></Tray>
      <Tray><circle cx="6.500" cy="7" r="5.500" stroke="#3ba8b8" /><circle cx="6.500" cy="7" r="4" fill="#5fd5e8" stroke="none" /><path d="M12 5 L14 3.500 V10.500 L12 9" stroke="#3ba8b8" /></Tray>
      <Tray><path d="M3 13 A10 10 0 0 1 13 3 M6 13 A7 7 0 0 1 13 6 M9 13 A4 4 0 0 1 13 9 M1 11 A11 11 0 0 1 10 1.500" strokeWidth="0.900" /><circle cx="12" cy="12" r="1" fill="#fff" /></Tray>
      <Tray><path d="M7.500 0.500 L13 2.500 V7 C13 10.500 10 12.500 7.500 13.500 C5 12.500 2 10.500 2 7 V2.500 Z" fill="#139470" stroke="#139470" /><path d="M5 7 L7 9 L10.500 5" strokeWidth="1.300" /></Tray>
      <Tray><path d="M4.500 0.500 L8 2.700 L4.500 5 L1 2.700 Z M11 0.500 L14.500 2.700 L11 5 L7.500 2.700 Z M4.500 5.500 L8 7.700 L4.500 10 L1 7.700 Z M11 5.500 L14.500 7.700 L11 10 L7.500 7.700 Z M7.700 9.500 L10.500 11.300 L7.700 13 L5 11.300 Z" fill="#fff" stroke="#010b0e" strokeWidth="0.500" /></Tray>
      <Tray><path d="M1.500 4 H12.500 V10.500 H1.500 Z M12.500 6 H14 V8.500 H12.500" /><path d="M3 5.500 H8 V9 H3 Z" fill="#eee" stroke="none" /></Tray>
      <Tray><path d="M1 5 H3.500 L6.500 2 V12 L3.500 9 H1 Z M8.500 5 C9.500 6 9.500 8 8.500 9 M10.500 3.500 C12.500 5.500 12.500 8.500 10.500 10.500 M12.500 2 C15 5 15 9 12.500 12" strokeWidth="0.900" /></Tray>
      <div className="ml-[2px] flex w-[53px] flex-col items-center whitespace-nowrap text-[10.5px] leading-[15px] tracking-[-0.5px]">
        <span>10:59 a. m.</span>
        <span>10/6/2020</span>
      </div>
      <Slot className="ml-[11px] w-[20px]">
        <svg width="15" height="15" viewBox="0 0 15 15"><path d="M0.500 1 H14 V11 H8 L4 14 V11 H0.500 Z" fill="#fff" /><path d="M3 4 H11.500 M3 6.500 H10 M3 9 H7" stroke="#333" /><circle cx="11" cy="10.500" r="3" fill="#333" stroke="#fff" /></svg>
      </Slot>
      <div className="ml-auto mr-[2px] h-full w-px bg-[#4b5457]" />
    </div>
  </footer>
);

export default function App() {
  return (
    <div className="relative flex h-[720px] w-[1280px] flex-col overflow-hidden bg-[#e6e6e6] font-['Open_Sans',sans-serif]">
      <TitleBar />
      <div className="bg-[#f4f5f1] shadow-[0_1px_2px_#ccc]">
        <Menu />
        <Ribbon />
      </div>
      <FormulaBar />
      <Grid />
      <SheetTabs />
      <StatusBar />
      <Taskbar />
      <div className="absolute right-0 top-[622px] h-[38px] w-[5px] rounded-full bg-[#7c7c7c]" />
    </div>
  );
}
